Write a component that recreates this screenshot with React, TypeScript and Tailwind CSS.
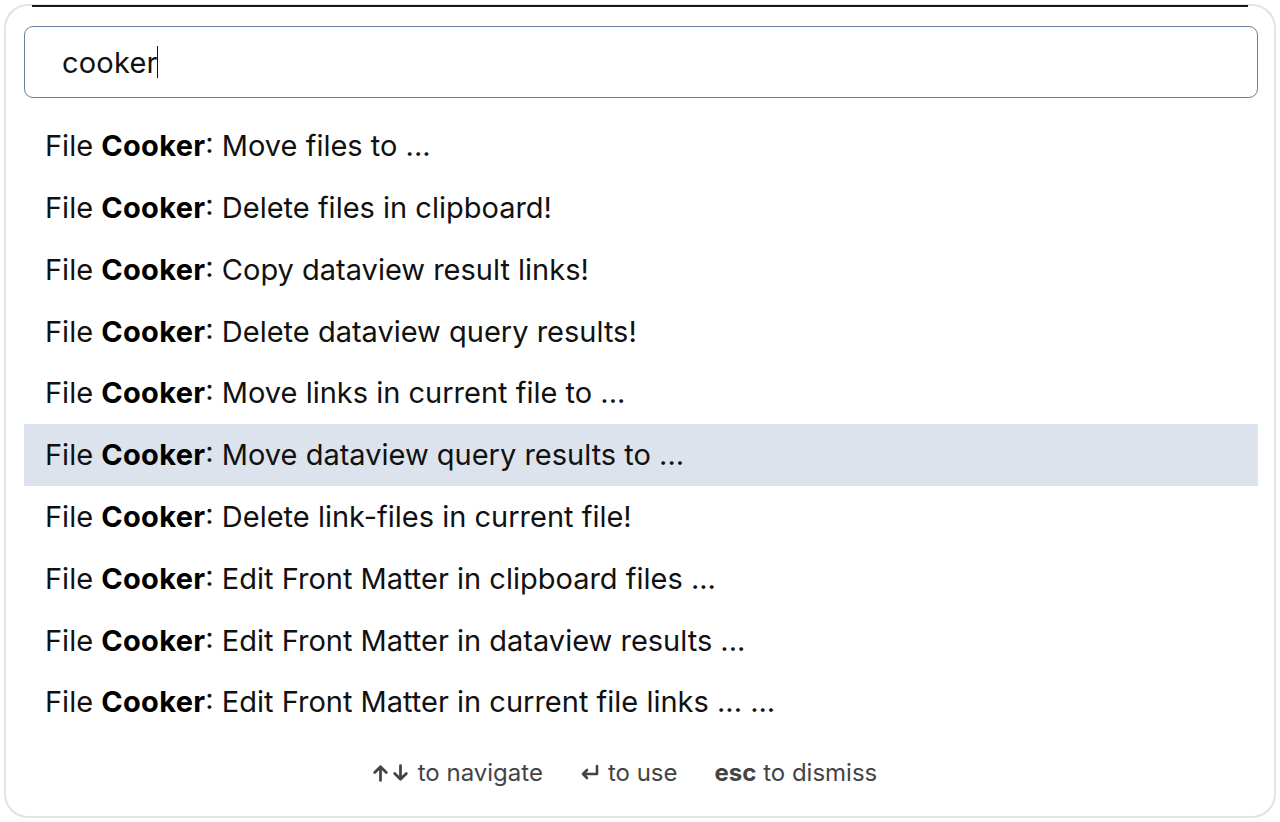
import React from "react";

const commands = [
  "Move files to ...",
  "Delete files in clipboard!",
  "Copy dataview result links!",
  "Delete dataview query results!",
  "Move links in current file to ...",
  "Move dataview query results to ...",
  "Delete link-files in current file!",
  "Edit Front Matter in clipboard files ...",
  "Edit Front Matter in dataview results ...",
  "Edit Front Matter in current file links ... ...",
];

const selected = 5;

export default function App() {
  return (
    <div
      className="w-[1280px] h-[822px] bg-white p-[4px] overflow-hidden"
      style={{ fontFamily: "Inter, 'Noto Sans', sans-serif" }}
    >
      <div className="relative h-[814px] rounded-[24px] border-[2px] border-[#e3e3e3] bg-white flex flex-col pl-[18px] pr-[16px] pt-[20px]">
        {/* dark rule along the top edge */}
        <div className="absolute top-[-1px] left-[26px] right-[26px] h-[2px] bg-[#1a1a1a]" />

        {/* search input */}
        <div className="h-[72px] rounded-[9px] border-[1.5px] border-[#6a829d] flex items-center pl-[37px]">
          <span className="text-[29px] text-[#111] leading-none tracking-[0.2px]">cooker</span>
          <span className="w-[1.5px] h-[32px] bg-[#111] ml-[-1px]" />
        </div>

        {/* suggestions */}
        <div className="flex flex-col mt-[17px]">
          {commands.map((c, i) => (
            <div
              key={c}
              className={
                "h-[61.8px] flex items-center pl-[21px] text-[29px] text-[#111] " +
                (i === selected ? "bg-[#dce3ec]" : "")
              }
            >
              <span>
                File <b className="font-bold text-black tracking-[0.3px]">Cooker</b>: {c}
              </span>
            </div>
          ))}
        </div>

        {/* keyboard hints */}
        <div className="flex items-center justify-center gap-[37px] mt-[22px] text-[24px] text-[#444] pr-[34px]">
          <span className="flex items-center gap-[8px]">
            <span className="flex items-center gap-[1px]">
              <svg width="19" height="20" viewBox="0 0 18 18" fill="none" stroke="#444" strokeWidth="2.6" strokeLinecap="round" strokeLinejoin="round">
                <path d="M9 16V3M3.5 8.5L9 3l5.5 5.5" />
              </svg>
              <svg width="19" height="20" viewBox="0 0 18 18" fill="none" stroke="#444" strokeWidth="2.6" strokeLinecap="round" strokeLinejoin="round">
                <path d="M9 2v13M3.5 9.5L9 15l5.5-5.5" />
              </svg>
            </span>
            to navigate
          </span>
          <span className="flex items-center gap-[8px]">
            <svg width="20" height="18" viewBox="0 0 20 18" fill="none" stroke="#444" strokeWidth="2.6" strokeLinecap="round" strokeLinejoin="round">
              <path d="M17 2v8H3M7 6l-4 4 4 4" />
            </svg>
            to use
          </span>
          <span>
            <b className="font-bold">esc</b> to dismiss
          </span>
        </div>
      </div>
    </div>
  );
}
